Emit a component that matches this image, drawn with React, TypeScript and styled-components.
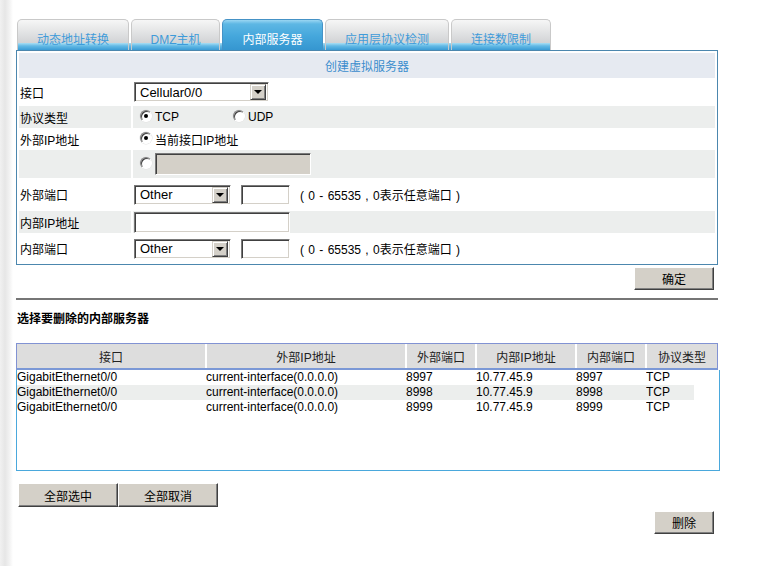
import React from "react";
import styled, { createGlobalStyle } from "styled-components";

const GlobalStyle = createGlobalStyle`
  html, body {
    margin: 0;
    padding: 0;
  }
  body {
    background: linear-gradient(to right, #f1f1f1 0, #e6e6e6 5px, #f4f4f4 10px, #ffffff 13px);
    font-family: "Liberation Sans", Arial, "Noto Sans CJK SC", sans-serif;
    font-size: 12px;
    color: #000;
  }
`;

const Page = styled.div`
  padding: 19px 0 20px 16px;
`;

const TabBar = styled.div`
  display: flex;
  gap: 2px;
  margin-left: 1px;
  width: max-content;
  height: 31px;
  background: linear-gradient(
    to bottom,
    transparent 24px,
    #a9def4 24px,
    #62b9e5 27px,
    #3a9bd5 31px
  );
`;

const Tab = styled.div<{ $w: number; $active?: boolean }>`
  box-sizing: border-box;
  width: ${(p) => p.$w}px;
  height: 31px;
  border: 1px solid ${(p) => (p.$active ? "#4592c6" : "#c9c9c9")};
  border-bottom: 0;
  border-radius: 5px 5px 0 0;
  padding-top: 12px;
  text-align: center;
  line-height: 16px;
  font-size: 12px;
  color: ${(p) => (p.$active ? "#ffffff" : "#3f9bd9")};
  background: ${(p) =>
    p.$active
      ? "linear-gradient(to bottom, #9ad6f2 0, #5db7e4 4px, #45a7dc 16px, #3596d0 30px)"
      : "linear-gradient(to bottom, #f6f6f6 0, #d1d3d5 23px, #a9def4 23px, #62b9e5 26px, #3a9bd5 30px)"};
`;

const Panel = styled.div`
  box-sizing: border-box;
  width: 702px;
  border: 1px solid #4c87ae;
  padding: 2px;
  display: grid;
  grid-template-columns: 112px 1fr;
  grid-template-rows: 25px 24px 22px 18px 28px 29px 22px 27px;
  gap: 2px;
  background: #fff;
`;

const PanelTitle = styled.div`
  grid-column: 1 / -1;
  display: flex;
  align-items: center;
  justify-content: center;
  background: #e6eaf1;
  color: #3b8dcd;
`;

const Cell = styled.div<{ $shade?: boolean; $pad?: number }>`
  display: flex;
  align-items: center;
  padding-left: ${(p) => p.$pad ?? 1}px;
  background: ${(p) => (p.$shade ? "#eceeed" : "#ffffff")};
  white-space: nowrap;
`;

const SelectBox = styled.div<{ $w: number }>`
  box-sizing: border-box;
  width: ${(p) => p.$w}px;
  height: 20px;
  border: 1px solid;
  border-color: #7a7a7a #ffffff #ffffff #7a7a7a;
  box-shadow: inset 1px 1px 0 #404040, inset -1px -1px 0 #d4d0c8;
  background: #fff;
  display: flex;
  align-items: center;
  padding: 0 2px 0 5px;
  font-size: 13px;
`;

const SelectText = styled.span`
  flex: 1;
`;

const SelectArrow = styled.span`
  box-sizing: border-box;
  width: 16px;
  height: 16px;
  background: #d4d0c8;
  border: 1px solid;
  border-color: #d4d0c8 #404040 #404040 #d4d0c8;
  box-shadow: inset 1px 1px 0 #fff, inset -1px -1px 0 #808080;
  display: flex;
  align-items: center;
  justify-content: center;

  &::after {
    content: "";
    border-left: 4px solid transparent;
    border-right: 4px solid transparent;
    border-top: 4px solid #000;
  }
`;

const TextBox = styled.input<{ $w: number; $h?: number; $disabled?: boolean }>`
  box-sizing: border-box;
  width: ${(p) => p.$w}px;
  height: ${(p) => p.$h ?? 20}px;
  margin: 0;
  padding: 0 3px;
  border: 1px solid;
  border-color: #7a7a7a #ffffff #ffffff #7a7a7a;
  box-shadow: inset 1px 1px 0 #404040, inset -1px -1px 0 #d4d0c8;
  background: ${(p) => (p.$disabled ? "#d4d0c8" : "#ffffff")};
  outline: none;
`;

const Gap = styled.span<{ $w: number }>`
  display: inline-block;
  width: ${(p) => p.$w}px;
`;

const RadioOption = styled.span<{ $w?: number }>`
  display: inline-flex;
  align-items: center;
  ${(p) => (p.$w ? `width: ${p.$w}px;` : "")}
`;

const Radio = styled.span<{ $checked?: boolean }>`
  box-sizing: border-box;
  width: 12px;
  height: 12px;
  margin: -2px 3px 0 0;
  border-radius: 50%;
  border: 1px solid;
  border-color: #808080 #ffffff #ffffff #808080;
  box-shadow: inset 1px 1px 0 #404040, 0 0 0 0.5px #e0e0e0;
  background: #fff;
  display: inline-flex;
  align-items: center;
  justify-content: center;

  &::after {
    content: "";
    width: 4px;
    height: 4px;
    border-radius: 50%;
    background: ${(p) => (p.$checked ? "#000" : "transparent")};
  }
`;

const Hint = styled.span`
  word-spacing: 1px;
`;

const ActionRow = styled.div<{ $top: number }>`
  box-sizing: border-box;
  width: 702px;
  margin-top: ${(p) => p.$top}px;
  display: flex;
  justify-content: flex-end;
  padding-right: 4px;
`;

const Button = styled.button<{ $w: number; $h?: number }>`
  box-sizing: border-box;
  width: ${(p) => p.$w}px;
  height: ${(p) => p.$h ?? 23}px;
  margin: 0;
  padding: 0;
  background: #d4d0c8;
  border: 1px solid;
  border-color: #ffffff #404040 #404040 #ffffff;
  box-shadow: inset -1px -1px 0 #808080;
  font-family: inherit;
  font-size: 12px;
  color: #000;
`;

const Divider = styled.div`
  width: 702px;
  height: 2px;
  margin-top: 8px;
  background: #767676;
`;

const SectionTitle = styled.div`
  margin: 12px 0 0 1px;
  line-height: 14px;
  font-weight: bold;
`;

const HeaderRow = styled.div`
  box-sizing: border-box;
  width: 702px;
  margin-top: 17px;
  display: grid;
  grid-template-columns: 188px 200px 70px 100px 70px 1fr;
  border: 1px solid #8192d3;
  border-bottom: 2px solid #7b98d6;
  background: #dddddd;
`;

const HeaderCell = styled.div<{ $first?: boolean }>`
  height: 24px;
  display: flex;
  align-items: center;
  justify-content: center;
  color: #222;
  border-left: ${(p) => (p.$first ? "0" : "2px solid #ffffff")};
`;

const ListBox = styled.div`
  box-sizing: border-box;
  width: 704px;
  height: 101px;
  border: 1px solid #4aa8dc;
  border-top: 0;
`;

const DataRow = styled.div<{ $shade?: boolean }>`
  width: 677px;
  height: 15px;
  display: grid;
  grid-template-columns: 189px 200px 70px 100px 70px 48px;
  line-height: 15px;
  background: ${(p) => (p.$shade ? "#eceeed" : "transparent")};
`;

const DataCell = styled.span`
  white-space: nowrap;
  overflow: hidden;
`;

const BulkRow = styled.div`
  display: flex;
  margin: 12px 0 0 2px;
`;

const tabs = [
  { label: "动态地址转换", w: 112 },
  { label: "DMZ主机", w: 89 },
  { label: "内部服务器", w: 101, active: true },
  { label: "应用层协议检测", w: 124 },
  { label: "连接数限制", w: 100 },
];

const columns = ["接口", "外部IP地址", "外部端口", "内部IP地址", "内部端口", "协议类型"];

const servers = [
  { port: "8997" },
  { port: "8998" },
  { port: "8999" },
];

function FakeSelect(props: { w: number; value: string }) {
  return (
    <SelectBox $w={props.w}>
      <SelectText>{props.value}</SelectText>
      <SelectArrow />
    </SelectBox>
  );
}

function PortField() {
  return (
    <>
      <FakeSelect w={97} value="Other" />
      <Gap $w={10} />
      <TextBox $w={49} defaultValue="" />
      <Gap $w={10} />
      <Hint>( 0 - 65535 , 0表示任意端口 )</Hint>
    </>
  );
}

export default function App() {
  return (
    <Page>
      <GlobalStyle />
      <TabBar>
        {tabs.map((t) => (
          <Tab key={t.label} $w={t.w} $active={t.active}>
            {t.label}
          </Tab>
        ))}
      </TabBar>

      <Panel>
        <PanelTitle>创建虚拟服务器</PanelTitle>

        <Cell>接口</Cell>
        <Cell>
          <FakeSelect w={135} value="Cellular0/0" />
        </Cell>

        <Cell $shade>协议类型</Cell>
        <Cell $shade $pad={7}>
          <RadioOption $w={93}>
            <Radio $checked />
            TCP
          </RadioOption>
          <RadioOption>
            <Radio />
            UDP
          </RadioOption>
        </Cell>

        <Cell>外部IP地址</Cell>
        <Cell $pad={7}>
          <RadioOption>
            <Radio $checked />
            当前接口IP地址
          </RadioOption>
        </Cell>

        <Cell $shade />
        <Cell $shade $pad={7}>
          <Radio />
          <TextBox $w={156} $h={22} $disabled disabled defaultValue="" />
        </Cell>

        <Cell>外部端口</Cell>
        <Cell>
          <PortField />
        </Cell>

        <Cell $shade>内部IP地址</Cell>
        <Cell $shade>
          <TextBox $w={156} $h={21} defaultValue="" />
        </Cell>

        <Cell>内部端口</Cell>
        <Cell>
          <PortField />
        </Cell>
      </Panel>

      <ActionRow $top={2}>
        <Button $w={80}>确定</Button>
      </ActionRow>

      <Divider />

      <SectionTitle>选择要删除的内部服务器</SectionTitle>

      <HeaderRow>
        {columns.map((c, i) => (
          <HeaderCell key={c} $first={i === 0}>
            {c}
          </HeaderCell>
        ))}
      </HeaderRow>
      <ListBox>
        {servers.map((s, i) => (
          <DataRow key={s.port} $shade={i === 1}>
            <DataCell>GigabitEthernet0/0</DataCell>
            <DataCell>current-interface(0.0.0.0)</DataCell>
            <DataCell>{s.port}</DataCell>
            <DataCell>10.77.45.9</DataCell>
            <DataCell>{s.port}</DataCell>
            <DataCell>TCP</DataCell>
          </DataRow>
        ))}
      </ListBox>

      <BulkRow>
        <Button $w={100} $h={24}>全部选中</Button>
        <Button $w={100} $h={24}>全部取消</Button>
      </BulkRow>

      <ActionRow $top={4}>
        <Button $w={60}>删除</Button>
      </ActionRow>
    </Page>
  );
}
